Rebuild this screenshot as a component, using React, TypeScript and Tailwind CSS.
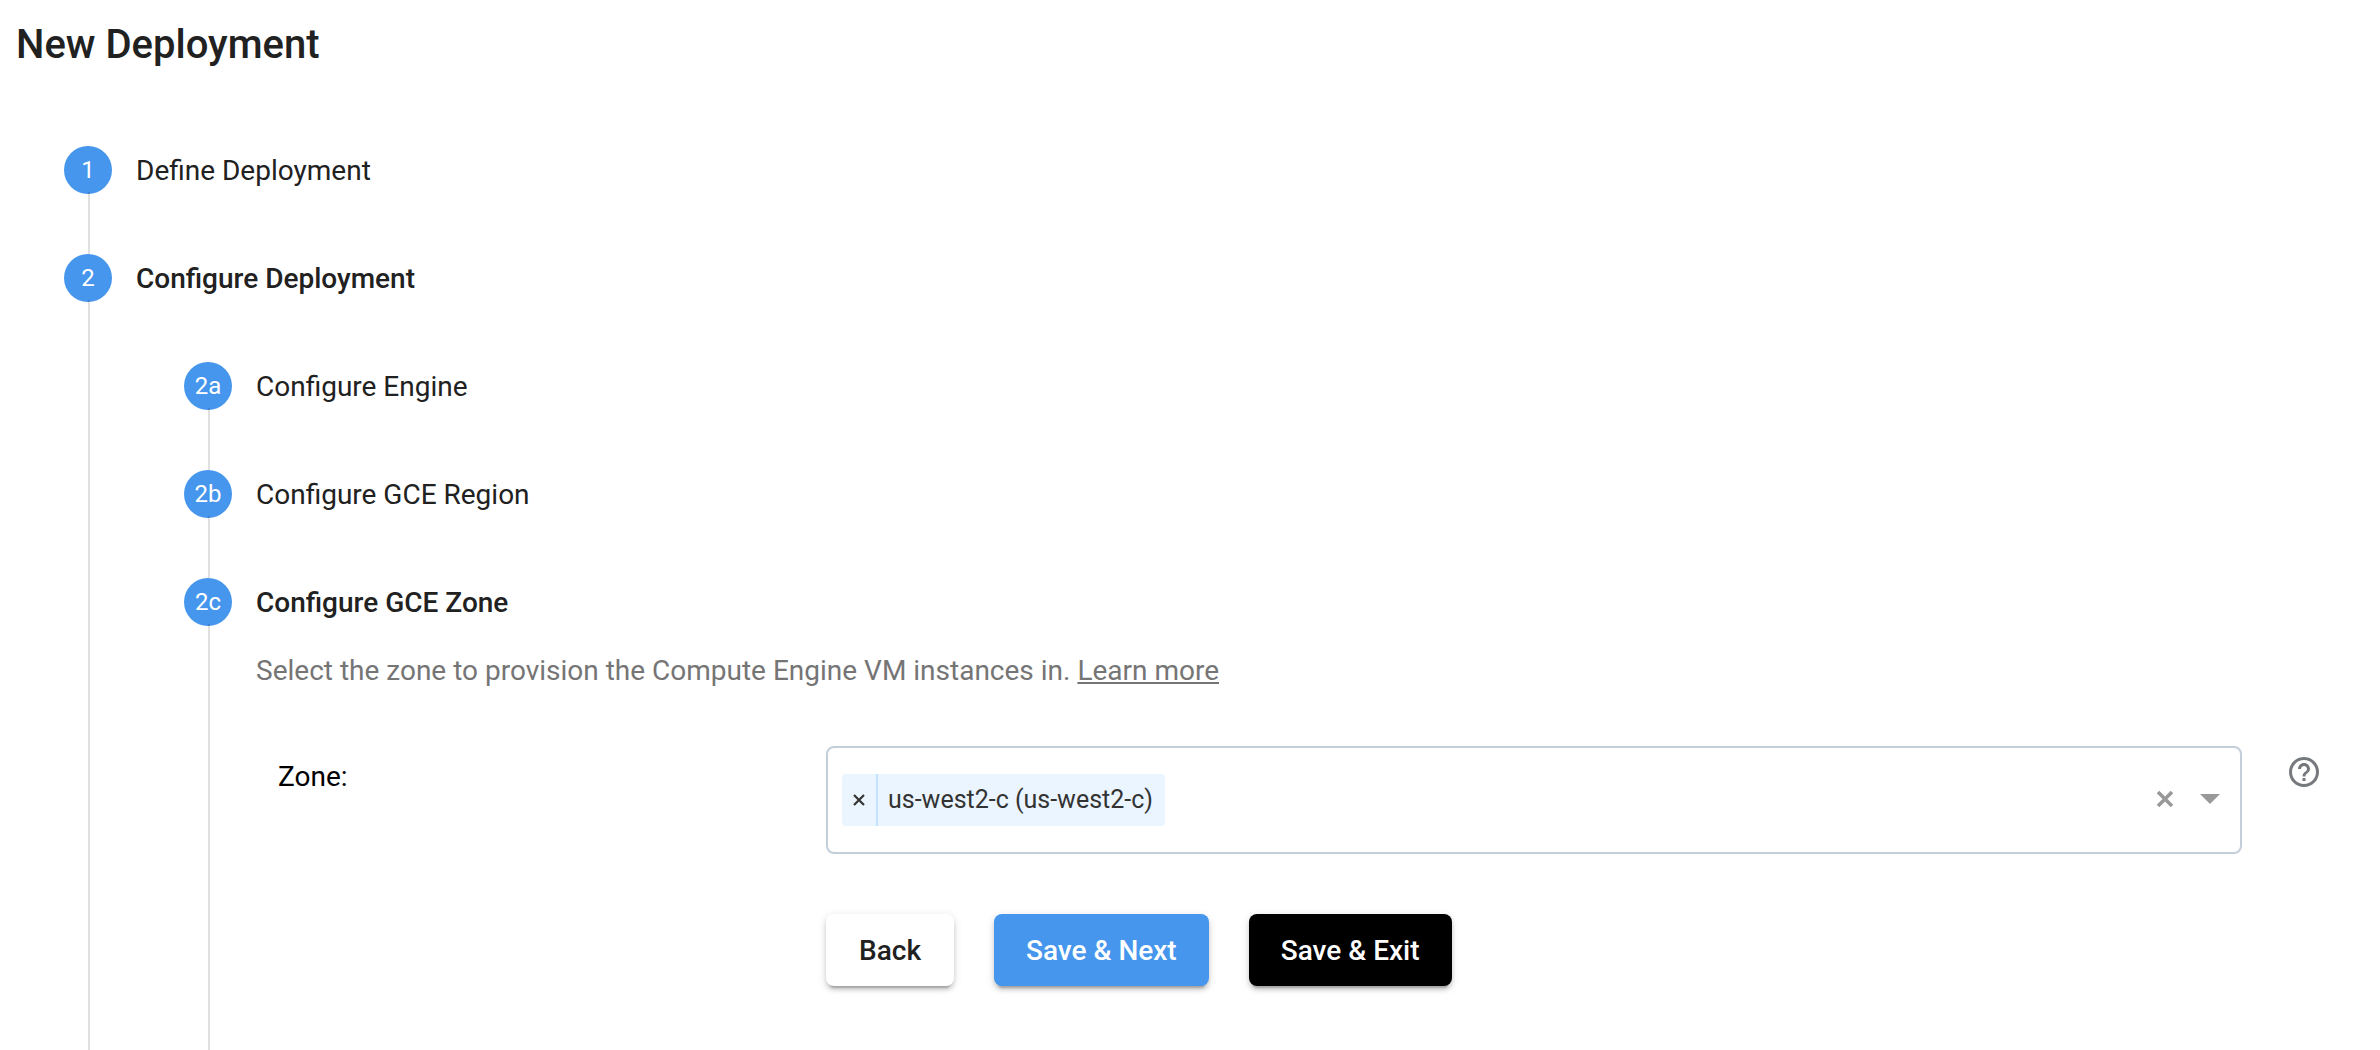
import type { ReactNode } from 'react';

type StepProps = {
  marker: string;
  title: string;
  active?: boolean;
  last?: boolean;
  children?: ReactNode;
};

function Step({ marker, title, active, last, children }: StepProps) {
  return (
    <li
      className={last ? 'flex flex-1 gap-6' : 'flex gap-6'}
      aria-current={active ? 'step' : undefined}
    >
      <div className="flex w-12 shrink-0 flex-col">
        <span className="flex h-12 w-12 shrink-0 items-center justify-center rounded-full bg-[#4596ec] text-2xl text-white">
          {marker}
        </span>
        <span className="-mt-0.5 ml-6 w-0.5 flex-1 bg-black/12" />
      </div>
      <div className={last ? 'flex min-w-0 flex-1 flex-col' : 'min-w-0 flex-1 pb-15'}>
        <h2
          className={
            active ? 'h-12 text-[28px] leading-[50px] font-medium' : 'h-12 text-[28px] leading-[50px]'
          }
        >
          {title}
        </h2>
        {children}
      </div>
    </li>
  );
}

function ZoneSelect() {
  return (
    <div className="flex h-27 min-w-0 flex-1 items-center rounded-lg border-2 border-[#c2cfdb] bg-white pr-5 pl-3.5">
      <span className="flex h-13 items-stretch rounded bg-[#ebf5ff] text-[25px] text-[#333]">
        <button
          type="button"
          aria-label="Remove us-west2-c"
          className="flex w-9 items-center justify-center border-r-2 border-[#c2e0ff]"
        >
          <svg viewBox="0 0 12 12" className="h-3 w-3" fill="none" stroke="currentColor" strokeWidth="2.2">
            <path d="M1 1l10 10M11 1L1 11" />
          </svg>
        </button>
        <span className="flex items-center pr-3 pl-2.5 whitespace-nowrap">us-west2-c (us-west2-c)</span>
      </span>
      <input id="zone" type="text" className="h-13 min-w-0 flex-1 bg-transparent px-2 text-[25px] outline-none" />
      <div className="flex items-center gap-[26px] pb-0.5 text-[#999]">
        <button type="button" aria-label="Clear zone">
          <svg viewBox="0 0 18 18" className="h-4.5 w-4.5" fill="none" stroke="currentColor" strokeWidth="3.6">
            <path d="M2 2l14 14M16 2L2 16" />
          </svg>
        </button>
        <button type="button" aria-label="Show zones">
          <svg viewBox="0 0 20 10" className="h-2.5 w-5" fill="currentColor">
            <path d="M0 0h20L10 10z" />
          </svg>
        </button>
      </div>
    </div>
  );
}

const buttonBase =
  'h-18 min-w-32 rounded-lg px-8 pt-0.5 text-[28px] font-medium shadow-[0_6px_2px_-4px_rgba(0,0,0,0.2),0_4px_4px_0_rgba(0,0,0,0.14),0_2px_10px_0_rgba(0,0,0,0.12)]';

export default function App() {
  return (
    <main className="flex min-h-screen flex-col bg-white font-[Roboto,sans-serif] text-[#212121]">
      <h1 className="px-4 pt-5 text-[40px] leading-[50px] font-medium">New Deployment</h1>
      <ol className="flex flex-1 flex-col pt-19 pl-16">
        <Step marker="1" title="Define Deployment" />
        <Step marker="2" title="Configure Deployment" active last>
          <ol className="flex flex-1 flex-col pt-15 pl-12">
            <Step marker="2a" title="Configure Engine" />
            <Step marker="2b" title="Configure GCE Region" />
            <Step marker="2c" title="Configure GCE Zone" active last>
              <p className="mt-6 text-[28px] leading-[42px] text-[#757575]">
                Select the zone to provision the Compute Engine VM instances in.{' '}
                <a href="#learn-more" className="underline">
                  Learn more
                </a>
              </p>
              <form className="mt-[54px] flex flex-col gap-15" onSubmit={(e) => e.preventDefault()}>
                <div className="flex items-start pr-[58px]">
                  <label
                    htmlFor="zone"
                    className="w-[570px] shrink-0 pt-2.5 pl-[22px] text-[28px] leading-[42px] text-black"
                  >
                    Zone:
                  </label>
                  <ZoneSelect />
                  <button type="button" aria-label="Help" className="mt-2 ml-11 text-[#75787d]">
                    <svg viewBox="0 0 24 24" className="h-9 w-9" fill="currentColor">
                      <path d="M11 18h2v-2h-2v2zm1-16C6.48 2 2 6.48 2 12s4.48 10 10 10 10-4.48 10-10S17.52 2 12 2zm0 18c-4.41 0-8-3.59-8-8s3.59-8 8-8 8 3.59 8 8-3.59 8-8 8zm0-14c-2.21 0-4 1.79-4 4h2c0-1.1.9-2 2-2s2 .9 2 2c0 2-3 1.75-3 5h2c0-2.25 3-2.5 3-5 0-2.21-1.79-4-4-4z" />
                    </svg>
                  </button>
                </div>
                <div className="flex gap-10 pl-[570px]">
                  <button type="button" className={`${buttonBase} bg-white`}>
                    Back
                  </button>
                  <button type="submit" className={`${buttonBase} bg-[#4596ec] text-white`}>
                    Save &amp; Next
                  </button>
                  <button type="button" className={`${buttonBase} bg-black text-white`}>
                    Save &amp; Exit
                  </button>
                </div>
              </form>
            </Step>
          </ol>
        </Step>
      </ol>
    </main>
  );
}
